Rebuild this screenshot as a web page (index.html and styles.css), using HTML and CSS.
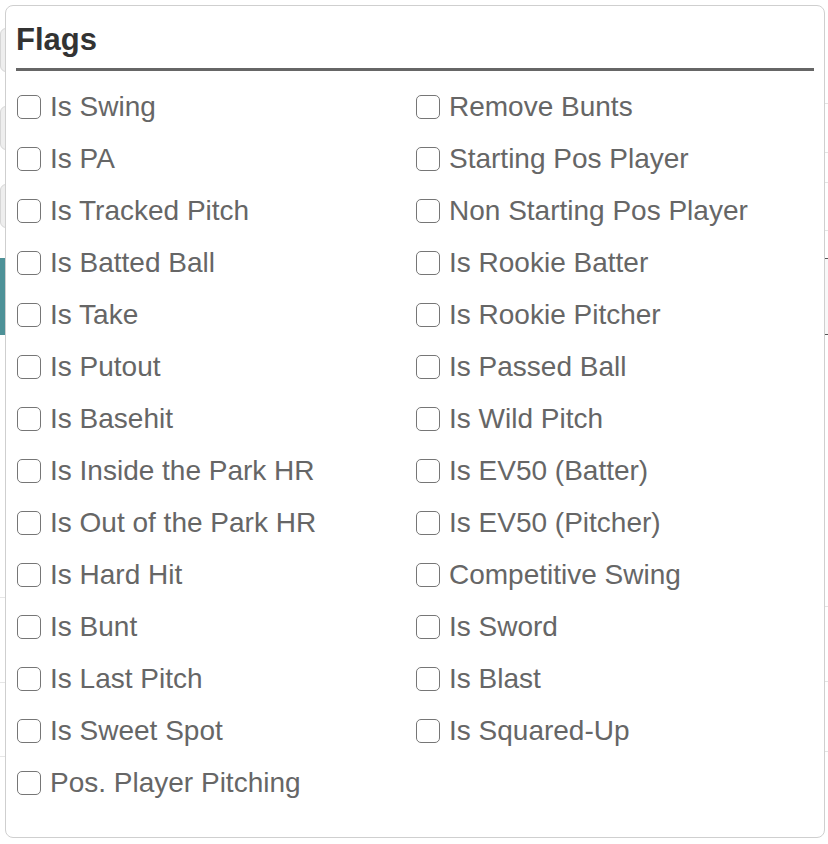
FILE: index.html
```html
<!DOCTYPE html>
<html lang="en">
<head>
<meta charset="utf-8">
<title>Flags</title>
<link rel="stylesheet" href="styles.css">
</head>
<body>
<div class="page">
  <div class="side-left">
    <div class="btn btn-1"></div>
    <div class="btn btn-2"></div>
    <div class="btn btn-3"></div>
    <div class="teal"></div>
    <div class="rule rule-a"></div>
    <div class="rule rule-b"></div>
    <div class="rule rule-c"></div>
  </div>
  <div class="side-right">
    <div class="trow r1"></div>
    <div class="trow r2"></div>
    <div class="trow r3"></div>
    <div class="trow r4"></div>
    <div class="trow dark r5"></div>
    <div class="trow r6"></div>
    <div class="trow r7"></div>
    <div class="trow r8"></div>
  </div>
</div>

<div class="panel">
  <h2 class="title">Flags</h2>
  <div class="flags">
    <label class="flag"><span class="box"></span><span>Is Swing</span></label>
    <label class="flag"><span class="box"></span><span>Is PA</span></label>
    <label class="flag"><span class="box"></span><span>Is Tracked Pitch</span></label>
    <label class="flag"><span class="box"></span><span>Is Batted Ball</span></label>
    <label class="flag"><span class="box"></span><span>Is Take</span></label>
    <label class="flag"><span class="box"></span><span>Is Putout</span></label>
    <label class="flag"><span class="box"></span><span>Is Basehit</span></label>
    <label class="flag"><span class="box"></span><span>Is Inside the Park HR</span></label>
    <label class="flag"><span class="box"></span><span>Is Out of the Park HR</span></label>
    <label class="flag"><span class="box"></span><span>Is Hard Hit</span></label>
    <label class="flag"><span class="box"></span><span>Is Bunt</span></label>
    <label class="flag"><span class="box"></span><span>Is Last Pitch</span></label>
    <label class="flag"><span class="box"></span><span>Is Sweet Spot</span></label>
    <label class="flag"><span class="box"></span><span>Pos. Player Pitching</span></label>
    <label class="flag"><span class="box"></span><span>Remove Bunts</span></label>
    <label class="flag"><span class="box"></span><span>Starting Pos Player</span></label>
    <label class="flag"><span class="box"></span><span>Non Starting Pos Player</span></label>
    <label class="flag"><span class="box"></span><span>Is Rookie Batter</span></label>
    <label class="flag"><span class="box"></span><span>Is Rookie Pitcher</span></label>
    <label class="flag"><span class="box"></span><span>Is Passed Ball</span></label>
    <label class="flag"><span class="box"></span><span>Is Wild Pitch</span></label>
    <label class="flag"><span class="box"></span><span>Is EV50 (Batter)</span></label>
    <label class="flag"><span class="box"></span><span>Is EV50 (Pitcher)</span></label>
    <label class="flag"><span class="box"></span><span>Competitive Swing</span></label>
    <label class="flag"><span class="box"></span><span>Is Sword</span></label>
    <label class="flag"><span class="box"></span><span>Is Blast</span></label>
    <label class="flag"><span class="box"></span><span>Is Squared-Up</span></label>
  </div>
</div>
</body>
</html>
```

FILE: styles.css
```css
* { box-sizing: border-box; }

html, body {
  margin: 0;
  padding: 0;
  background: #ffffff;
  font-family: "Liberation Sans", Arial, Helvetica, sans-serif;
  width: 828px;
  height: 844px;
  overflow: hidden;
}

/* background page peeking out behind the popover */
.page {
  display: flex;
  justify-content: space-between;
  height: 844px;
}

.side-left {
  width: 120px;
  display: flex;
  flex-direction: column;
  padding-top: 28px;
}

.btn {
  height: 44px;
  border: 1px solid #d6d6d6;
  border-radius: 6px;
  background: #eeeeee;
}
.btn-2 { margin-top: 34px; }
.btn-3 { margin-top: 34px; }

.teal {
  margin-top: 30px;
  height: 77px;
  background: #4d9197;
}

.rule {
  height: 1px;
  background: #e6e6e6;
}
.rule-a { margin-top: 262px; }
.rule-b { margin-top: 84px; }
.rule-c { margin-top: 73px; }

.side-right {
  width: 120px;
  display: flex;
  flex-direction: column;
  padding-top: 103px;
}

.trow {
  border-top: 1px solid #e3e3e3;
}
.r1 { height: 49px; }
.r2 { height: 30px; }
.r3 { height: 48px; }
.r4 { height: 28px; }
.r5 { height: 77px; border-top: 1px solid #555; border-bottom: 1px solid #555; background: #f8f8f8; }
.r6 { height: 271px; border-top: none; }
.r7 { height: 75px; }
.r8 { height: 71px; border-bottom: 1px solid #e3e3e3; }

/* popover panel */
.panel {
  position: absolute;
  top: 5px;
  left: 5px;
  width: 820px;
  background: #ffffff;
  border: 1px solid #cfcfcf;
  border-radius: 8px;
  padding: 16px 10px 28px 10px;
}

.title {
  margin: 0;
  font-size: 31px;
  line-height: 36px;
  font-weight: bold;
  color: #333333;
  padding-bottom: 10px;
  border-bottom: 3px solid #666666;
}

.flags {
  margin-top: 10px;
  display: grid;
  grid-template-columns: 1fr 1fr;
  grid-template-rows: repeat(14, 52px);
  grid-auto-flow: column;
}

.flag {
  display: flex;
  align-items: center;
  gap: 9px;
  font-size: 28px;
  color: #666666;
  white-space: nowrap;
}

.box {
  flex: none;
  width: 24px;
  height: 24px;
  margin-left: 1px;
  border: 1.5px solid #767676;
  border-radius: 5px;
  background: #ffffff;
}
```
